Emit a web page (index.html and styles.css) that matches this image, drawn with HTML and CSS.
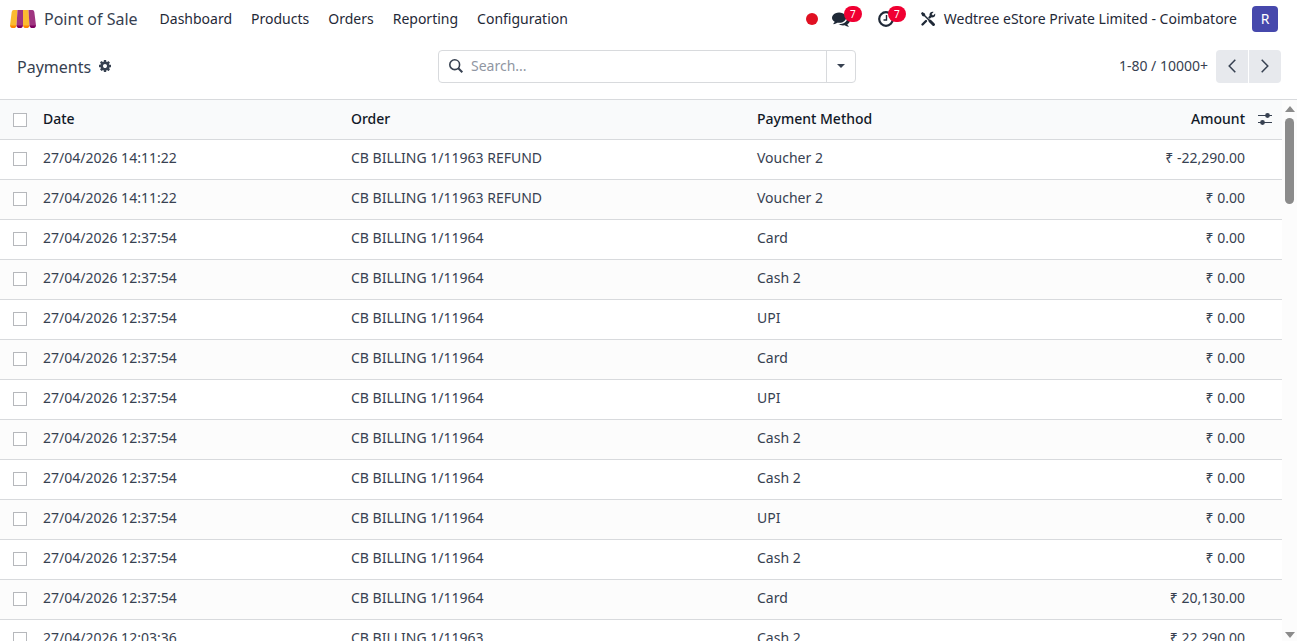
FILE: index.html
```html
<!DOCTYPE html>
<html lang="en">
<head>
    <meta charset="utf-8">
    <title>Payments - Point of Sale</title>
    <link rel="stylesheet" href="styles.css">
</head>
<body>
    <header class="navbar">
        <a href="#" class="brand">
            <svg class="logo" viewBox="0 0 26 18" width="26" height="18">
                <path d="M0 15h6.5a3 3 0 0 1-6.5 0z" fill="#ff8600"/>
                <path d="M6.5 15H13a3.2 3.2 0 0 1-6.5 0z" fill="#7d005f"/>
                <path d="M13 15h6.500a3.200 3.200 0 0 1-6.500 0z" fill="#ff8600"/>
                <path d="M19.500 15H26a3 3 0 0 1-6.500 0z" fill="#7d005f"/>
                <path d="M3.500 0H7.500L6.500 15.500H0L1.700 2Q2 0 3.500 0z" fill="#fbbb30"/>
                <path d="M7.500 0H13v15.500H6.500z" fill="#9f3580"/>
                <path d="M13 0h5.500l1 15.500H13z" fill="#fbbb30"/>
                <path d="M18.500 0h4Q24 0 24.300 2L26 15.500h-6.500z" fill="#9f3580"/>
            </svg>
            <span>Point of Sale</span>
        </a>
        <nav class="menu">
            <a href="#">Dashboard</a>
            <a href="#">Products</a>
            <a href="#">Orders</a>
            <a href="#">Reporting</a>
            <a href="#">Configuration</a>
        </nav>
        <div class="systray">
            <span class="status"></span>
            <button class="tray-btn messages" aria-label="Messages">
                <svg viewBox="0 0 1792 1792" width="18" height="18"><path d="M1408 768q0 139-94 257t-256.500 186.500-353.500 68.500q-86 0-176-16-124 88-278 128-36 9-86 16h-3q-11 0-20.500-8t-11.500-21q-1-3-1-6.500t.5-6.500 2-6l2.500-5 3.500-5.500 4-5 4.500-5 4-4.500q5-6 23-25t26-29.500 22.500-29 25-38.500 20.500-44q-124-72-195-177t-71-224q0-139 94-257t256.500-186.500 353.500-68.500 353.500 68.500 256.500 186.500 94 257zm384 256q0 120-71 224.500t-195 176.500q10 24 20.500 44t25 38.500 22.500 29 26 29.500 23 25q1 1 4 4.500t4.500 5 4 5 3.500 5.500l2.500 5 2 6 .5 6.500-1 6.500q-3 14-13 22t-22 7q-50-7-86-16-154-40-278-128-90 16-176 16-271 0-472-132 58 4 88 4 161 0 309-45t264-129q125-92 192-212t67-254q0-77-23-152 129 71 204 178t75 230z"/></svg>
                <span class="badge">7</span>
            </button>
            <button class="tray-btn activities" aria-label="Activities">
                <svg viewBox="0 0 16 16" width="16" height="16"><circle cx="8" cy="8" r="6.800" fill="none" stroke="currentColor" stroke-width="2.200"/><path d="M8.500 4v5H5.500" fill="none" stroke="currentColor" stroke-width="1.400"/></svg>
                <span class="badge">7</span>
            </button>
            <button class="tray-btn tools" aria-label="Tools">
                <svg viewBox="0 0 16 16" width="16" height="16">
                    <path d="M3 3l10 10" stroke="currentColor" stroke-width="1.500"/>
                    <path d="M10 10l3.500 3.500" stroke="currentColor" stroke-width="3" stroke-linecap="round"/>
                    <path d="M1 2.200L2.300 1l2.600 1.500.4 1.600-1.300 1.300-1.600-.5z"/>
                    <path d="M6 10l-3.500 3.500M9.500 6.500l2-2" stroke="currentColor" stroke-width="2.400" stroke-linecap="round"/>
                    <path d="M13.600 1l-2 2 .3 1.200 1.200.3 2-2c.5 1.800-.3 3.300-1.700 3.800-2 .6-3.900-.7-3.900-2.600C9.500 1.900 11.500.4 13.600 1z"/>
                </svg>
            </button>
            <button class="company">Wedtree eStore Private Limited - Coimbatore</button>
            <button class="avatar">R</button>
        </div>
    </header>

    <section class="control-panel">
        <div class="breadcrumb">
            <h1>Payments</h1>
            <button class="gear" aria-label="Actions">
                <svg viewBox="128 128 1536 1536" width="12" height="12"><path d="M1152 896q0-106-75-181t-181-75-181 75-75 181 75 181 181 75 181-75 75-181zm512-109v222q0 12-8 23t-20 13l-185 28q-19 54-39 91 35 50 107 138 10 12 10 25t-9 23q-27 37-99 108t-94 71q-12 0-26-9l-138-108q-44 23-91 38-16 136-29 186-7 28-36 28h-222q-14 0-24.500-8.500t-11.500-21.500l-28-184q-49-16-90-37l-141 107q-10 9-25 9-14 0-25-11-126-114-165-168-7-10-7-23 0-12 8-23 15-21 51-66.500t54-70.500q-27-50-41-99l-183-27q-13-2-21-12.500t-8-23.500v-222q0-12 8-23t19-13l186-28q14-46 39-92-40-57-107-138-10-12-10-24 0-10 9-23 26-36 98.500-107.500t94.500-71.500q13 0 26 10l138 107q44-23 91-38 16-136 29-186 7-28 36-28h222q14 0 24.500 8.500t11.500 21.500l28 184q49 16 90 37l142-107q9-9 24-9 13 0 25 10 129 119 165 170 7 8 7 22 0 12-8 23-15 21-51 66.500t-54 70.500q26 50 41 98l183 28q13 2 21 12.500t8 23.500z"/></svg>
            </button>
        </div>
        <div class="search">
            <svg viewBox="0 0 14 14" width="14" height="14"><circle cx="5.700" cy="5.700" r="4.900" fill="none" stroke="currentColor" stroke-width="1.600"/><path d="M9.300 9.300l4 4" stroke="currentColor" stroke-width="2"/></svg>
            <input type="text" placeholder="Search..." aria-label="Search">
            <button aria-label="Toggle filters">
                <svg viewBox="0 0 8 4" width="8" height="4"><path d="M0 0h8L4 4z"/></svg>
            </button>
        </div>
        <div class="pager">
            <span>1-80 / 10000+</span>
            <div class="pager-buttons">
                <button aria-label="Previous"><svg viewBox="0 0 8 14" width="8" height="14"><path d="M7.300.7L1.200 7l6.100 6.300"/></svg></button>
                <button aria-label="Next"><svg viewBox="0 0 8 14" width="8" height="14"><path d="M.7.7L6.800 7 .7 13.300"/></svg></button>
            </div>
        </div>
    </section>

    <main class="content">
        <div class="list">
            <table>
                <colgroup>
                    <col class="col-check">
                    <col class="col-date">
                    <col class="col-order">
                    <col>
                    <col>
                    <col class="col-options">
                </colgroup>
                <thead>
                    <tr>
                        <th><input type="checkbox" aria-label="Select all"></th>
                        <th>Date</th>
                        <th>Order</th>
                        <th>Payment Method</th>
                        <th class="amount">Amount</th>
                        <th>
                            <button class="options" aria-label="Optional columns">
                                <svg viewBox="0 0 14 12" width="14" height="12"><path d="M0 2.500h14M0 9.500h14" stroke="currentColor" stroke-width="1.200"/><circle cx="9.500" cy="2.500" r="2.400"/><circle cx="4.500" cy="9.500" r="2.400"/></svg>
                            </button>
                        </th>
                    </tr>
                </thead>
                <tbody>
                    <tr><td><input type="checkbox" aria-label="Select row"></td><td>27/04/2026 14:11:22</td><td>CB BILLING 1/11963 REFUND</td><td>Voucher 2</td><td class="amount">₹ -22,290.00</td><td></td></tr>
                    <tr><td><input type="checkbox" aria-label="Select row"></td><td>27/04/2026 14:11:22</td><td>CB BILLING 1/11963 REFUND</td><td>Voucher 2</td><td class="amount">₹ 0.00</td><td></td></tr>
                    <tr><td><input type="checkbox" aria-label="Select row"></td><td>27/04/2026 12:37:54</td><td>CB BILLING 1/11964</td><td>Card</td><td class="amount">₹ 0.00</td><td></td></tr>
                    <tr><td><input type="checkbox" aria-label="Select row"></td><td>27/04/2026 12:37:54</td><td>CB BILLING 1/11964</td><td>Cash 2</td><td class="amount">₹ 0.00</td><td></td></tr>
                    <tr><td><input type="checkbox" aria-label="Select row"></td><td>27/04/2026 12:37:54</td><td>CB BILLING 1/11964</td><td>UPI</td><td class="amount">₹ 0.00</td><td></td></tr>
                    <tr><td><input type="checkbox" aria-label="Select row"></td><td>27/04/2026 12:37:54</td><td>CB BILLING 1/11964</td><td>Card</td><td class="amount">₹ 0.00</td><td></td></tr>
                    <tr><td><input type="checkbox" aria-label="Select row"></td><td>27/04/2026 12:37:54</td><td>CB BILLING 1/11964</td><td>UPI</td><td class="amount">₹ 0.00</td><td></td></tr>
                    <tr><td><input type="checkbox" aria-label="Select row"></td><td>27/04/2026 12:37:54</td><td>CB BILLING 1/11964</td><td>Cash 2</td><td class="amount">₹ 0.00</td><td></td></tr>
                    <tr><td><input type="checkbox" aria-label="Select row"></td><td>27/04/2026 12:37:54</td><td>CB BILLING 1/11964</td><td>Cash 2</td><td class="amount">₹ 0.00</td><td></td></tr>
                    <tr><td><input type="checkbox" aria-label="Select row"></td><td>27/04/2026 12:37:54</td><td>CB BILLING 1/11964</td><td>UPI</td><td class="amount">₹ 0.00</td><td></td></tr>
                    <tr><td><input type="checkbox" aria-label="Select row"></td><td>27/04/2026 12:37:54</td><td>CB BILLING 1/11964</td><td>Cash 2</td><td class="amount">₹ 0.00</td><td></td></tr>
                    <tr><td><input type="checkbox" aria-label="Select row"></td><td>27/04/2026 12:37:54</td><td>CB BILLING 1/11964</td><td>Card</td><td class="amount">₹ 20,130.00</td><td></td></tr>
                    <tr><td><input type="checkbox" aria-label="Select row"></td><td>27/04/2026 12:03:36</td><td>CB BILLING 1/11963</td><td>Cash 2</td><td class="amount">₹ 22,290.00</td><td></td></tr>
                </tbody>
            </table>
        </div>
        <div class="scrollbar">
            <svg viewBox="0 0 10 6" width="10" height="6"><path d="M5 0l5 6H0z"/></svg>
            <div class="thumb"></div>
            <svg viewBox="0 0 10 6" width="10" height="6"><path d="M0 0h10L5 6z"/></svg>
        </div>
    </main>
</body>
</html>
```
FILE: styles.css
```css
* {
    box-sizing: border-box;
}
body {
    margin: 0;
    height: 100vh;
    display: flex;
    flex-direction: column;
    overflow: hidden;
    font-family: "Noto Sans", "Open Sans", sans-serif;
    font-size: 14px;
    line-height: 20px;
    color: #374151;
    background-color: #fff;
}
a {
    color: inherit;
    text-decoration: none;
}
button {
    padding: 0;
    border: none;
    background: none;
    font: inherit;
    color: inherit;
    cursor: pointer;
}
svg {
    display: block;
    flex: none;
    fill: currentColor;
}

/* top bar */
.navbar {
    display: flex;
    align-items: center;
    height: 38px;
    padding: 0 19px 0 10px;
    color: #1f2937;
    white-space: nowrap;
}
.brand {
    display: flex;
    align-items: center;
    gap: 8px;
    font-size: 16px;
    color: #374151;
}
.menu {
    display: flex;
    gap: 19px;
    margin-left: 22px;
}
.systray {
    display: flex;
    align-items: center;
    margin-left: auto;
}
.status {
    width: 12px;
    height: 12px;
    border-radius: 50%;
    background-color: #e01022;
}
.tray-btn {
    position: relative;
}
.messages {
    margin-left: 14px;
}
.activities {
    margin-left: 28px;
}
.tools {
    margin-left: 26px;
}
.badge {
    position: absolute;
    top: -4px;
    left: 12px;
    width: 18px;
    height: 16px;
    border-radius: 8px;
    background-color: #f00032;
    color: #fff;
    font-size: 10px;
    line-height: 16px;
    text-align: center;
}
.activities .badge {
    top: -5px;
    left: 10px;
}
.company {
    margin-left: 8px;
}
.avatar {
    width: 26px;
    height: 26px;
    margin-left: 15px;
    border-radius: 4px;
    background-color: #4648ac;
    color: #fff;
}

/* control panel */
.control-panel {
    display: flex;
    align-items: center;
    height: 61px;
    padding: 0 16px 5px 13px;
}
.breadcrumb {
    flex: 1;
    display: flex;
    align-items: center;
    gap: 8px;
}
.breadcrumb h1 {
    margin: 2px 0 0 4px;
    font-size: 16px;
    font-weight: 400;
}
.search {
    flex: 0 1 418px;
    display: flex;
    align-items: center;
    height: 33px;
    padding-left: 10px;
    border: 1px solid #d8dadd;
    border-radius: 4px;
}
.search input {
    flex: 1;
    min-width: 0;
    padding: 0 8px;
    border: none;
    outline: none;
    background: none;
    font: inherit;
    color: inherit;
}
.search input::placeholder {
    color: #9096a2;
}
.search button {
    display: flex;
    align-items: center;
    justify-content: center;
    width: 29px;
    height: 31px;
    border-left: 1px solid #d8dadd;
}
.pager {
    flex: 1;
    display: flex;
    align-items: center;
    justify-content: flex-end;
    gap: 8px;
}
.pager-buttons {
    display: flex;
    gap: 1px;
}
.pager-buttons button {
    display: flex;
    align-items: center;
    justify-content: center;
    width: 32px;
    height: 33px;
    background-color: #e7e9ed;
}
.pager-buttons button:first-child {
    border-radius: 4px 0 0 4px;
}
.pager-buttons button:last-child {
    border-radius: 0 4px 4px 0;
}
.pager-buttons svg {
    fill: none;
    stroke: currentColor;
    stroke-width: 1.5;
}

/* payments list */
.content {
    flex: 1;
    display: flex;
    min-height: 0;
    border-top: 1px solid #d8dadd;
}
.list {
    flex: 1;
    overflow: hidden;
}
table {
    width: 100%;
    table-layout: fixed;
    border-collapse: separate;
    border-spacing: 0;
}
.col-check {
    width: 39px;
}
.col-date {
    width: 308px;
}
.col-order {
    width: 406px;
}
.col-options {
    width: 33px;
}
th, td {
    height: 40px;
    border-bottom: 1px solid #d8dadd;
    text-align: left;
    white-space: nowrap;
}
th {
    padding: 0 4px 2px;
    background-color: #f9fafb;
    color: #111827;
    font-weight: 500;
}
td {
    padding: 0 4px 4px;
}
tbody tr:nth-child(even) {
    background-color: #fcfcfc;
}
th:first-child {
    padding: 0 0 0 13px;
}
td:first-child {
    padding: 0 0 2px 13px;
}
th.amount, td.amount {
    text-align: right;
}
input[type="checkbox"] {
    appearance: none;
    display: block;
    width: 14px;
    height: 14px;
    margin: 0;
    border: 1px solid #b6b8bc;
    background-color: #fff;
}
.options {
    display: block;
    margin-left: 5px;
    color: #374151;
}

/* scrollbar */
.scrollbar {
    display: flex;
    flex-direction: column;
    align-items: center;
    width: 15px;
    padding: 6px 0 3px;
    background-color: #fcfcfc;
    color: #8b8b8b;
}
.thumb {
    width: 9px;
    height: 86px;
    margin: 6px 0 auto;
    border-radius: 5px;
    background-color: #8b8b8b;
}
```
